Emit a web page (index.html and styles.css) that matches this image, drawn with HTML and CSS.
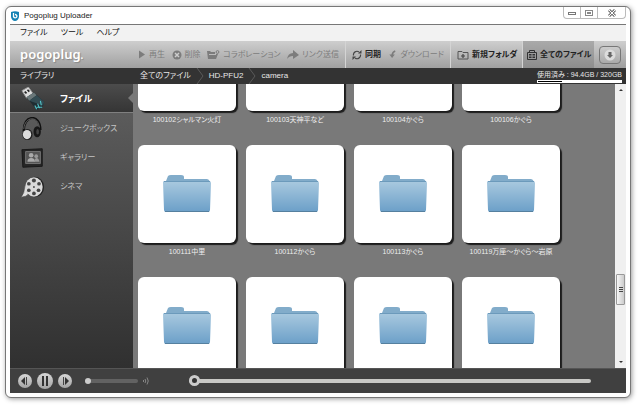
FILE: index.html
```html
<!DOCTYPE html>
<html lang="ja">
<head>
<meta charset="utf-8">
<title>Pogoplug Uploader</title>
<link rel="stylesheet" href="styles.css">
</head>
<body>
<svg class="defs" aria-hidden="true">
  <defs>
    <linearGradient id="blue" x1="0" y1="0" x2="0" y2="1"><stop offset="0" stop-color="#a9c9df"/><stop offset="1" stop-color="#6b9fc8"/></linearGradient>
    <linearGradient id="silver" x1="0" y1="0" x2="0" y2="1"><stop offset="0" stop-color="#d8d8d8"/><stop offset="1" stop-color="#a4a4a4"/></linearGradient>
    <symbol id="folder" viewBox="0 0 50 40">
      <path d="M4 7 6 2Q7 1 9 1H19Q22 1 22 3V5H45Q47 5 48 8V14H4Z" fill="#82acca"/>
      <path d="M1 8Q1 7 3 7H47Q49 7 49 9L48 36Q48 38 46 38H4Q2 38 2 36Z" fill="url(#blue)"/>
      <path d="M2 7.5H48" stroke="#6c9abb"/><path d="M3 37.5H47" stroke="#55809f"/>
    </symbol>
  </defs>
</svg>
<div class="window">
  <header class="titlebar">
    <svg class="app-icon" viewBox="0 0 10 10"><path d="M1 1Q5-.5 9 1V6Q8 10 5 10T1 6Z" fill="#1482b4"/><path d="M3.5 2V6M3.5 5A1.7 1.7 0 1 0 5 3.5" fill="none" stroke="#fff" stroke-width="1.3"/></svg>
    <h1>Pogoplug Uploader</h1>
    <div class="window-buttons">
      <button aria-label="最小化"><svg viewBox="0 0 10 8"><rect x="1.5" y="3.5" width="7" height="2" fill="#fff" stroke="#777"/></svg></button>
      <button aria-label="最大化"><svg viewBox="0 0 10 8"><rect x="1.5" y="1.5" width="7" height="5" fill="#fff" stroke="#888"/><rect x="3.5" y="3.5" width="3" height="1" fill="none" stroke="#888"/></svg></button>
      <button class="close" aria-label="閉じる"><svg viewBox="0 0 10 8"><path d="M2 1 8 7M8 1 2 7" stroke="#777" stroke-width="3"/><path d="M2 1 8 7M8 1 2 7" stroke="#fff"/></svg></button>
    </div>
  </header>
  <div class="client">
    <nav class="menubar"><button>ファイル</button><button>ツール</button><button>ヘルプ</button></nav>
    <div class="toolbar">
      <div class="logo">pogoplug<small>.</small></div>
      <div class="group actions">
        <button disabled><svg viewBox="0 0 8 8" class="i8"><path d="M1 0 7 4 1 8Z" fill="currentColor"/></svg>再生</button>
        <button disabled><svg viewBox="0 0 10 10" class="i10"><circle cx="5" cy="5" r="4.5" fill="currentColor"/><path d="M3 3 7 7M7 3 3 7" stroke="#ccc" stroke-width="1.5"/></svg>削除</button>
        <button disabled><svg viewBox="0 0 13 10" class="i13"><path d="M0 1H3L4 2H8V4H11L9 9H1Z" fill="currentColor"/><path d="M2 4.5H9" stroke="#bbb"/><circle cx="10.5" cy="2" r="1.4" fill="none" stroke="currentColor"/></svg>コラボレーション</button>
        <button disabled><svg viewBox="0 0 12 10" class="i12"><path d="M0 9Q1 3 6 3V0L12 5 6 9V6Q2 6 0 9Z" fill="currentColor"/></svg>リンク送信</button>
      </div>
      <div class="group sync">
        <button><svg viewBox="0 0 10 10" class="i10"><path d="M1.5 5.5A3.5 3.5 0 0 1 7 2M8.5 4.5A3.5 3.5 0 0 1 3 8" fill="none" stroke="#444" stroke-width="1.2"/><path d="M6 3.5H9.5V0ZM4 6.5H.5V10Z" fill="#444"/></svg>同期</button>
        <button disabled><svg viewBox="0 0 8 10" class="i8"><path d="M6.5 1Q3.5 2 3 6" fill="none" stroke="currentColor" stroke-width="1.8"/><path d="M0 5H6L3 9Z" fill="currentColor"/></svg>ダウンロード</button>
      </div>
      <div class="group create"><button><svg viewBox="0 0 12 10" class="i12"><path d="M1 1.5H5L6 2.5H11V9H1Z" fill="none" stroke="#555"/><path d="M6 4V8M4 6H8" stroke="#444" stroke-width="1.2"/></svg>新規フォルダ</button></div>
      <div class="group all"><button><svg viewBox="0 0 10 10" class="i10"><path d="M.5 2.5H9.5V9.5H.5ZM2.5 2V.5H7.5V2" fill="none" stroke="#333"/><path d="M2 4H4.5V5.5H2ZM5.5 4H8V5.5H5.5ZM2 6.5H4.5V8H2ZM5.5 6.5H8V8H5.5Z" fill="#333"/></svg>全てのファイル</button></div>
      <button class="drop" aria-label="転送"><svg viewBox="0 0 12 12"><circle cx="6" cy="6" r="5.5" fill="#ddd"/><path d="M4.5 3H7.5V6H9L6 9 3 6H4.5Z" fill="#666"/></svg></button>
    </div>
    <div class="pathbar">
      <h2>ライブラリ</h2>
      <nav class="crumbs">
        <a href="#">全てのファイル</a><svg viewBox="0 0 8 16"><path d="M1 0 7 8 1 16" fill="none" stroke="#5a5a5a"/></svg>
        <a href="#">HD-PFU2</a><svg viewBox="0 0 8 16"><path d="M1 0 7 8 1 16" fill="none" stroke="#5a5a5a"/></svg>
        <a href="#">camera</a>
      </nav>
      <div class="usage"><span>使用済み : 94.4GB / 320GB</span><div class="meter"><i></i></div></div>
    </div>
    <div class="main">
      <nav class="sidebar">
        <a href="#" class="active"><svg viewBox="0 0 26 26"><path d="M1 4 8 0 13 7 6 12Z" fill="#ddd" stroke="#999"/><path d="M4 5 6 7M7 3 9 5" stroke="#222" stroke-width="1.8"/><path d="M6 11 14 6 25 16Q26 22 17 25Z" fill="#1f2d32"/><path d="M6 11 14 6 17 9 9 15Z" fill="#6a7779"/><path d="M9 15 17 9 25 16 24 20Z" fill="#344c53"/><path d="M15 20 17 24M18 18 20 23M21 15 22 20M17 22H23" stroke="#53c4c9" stroke-width="1.2"/></svg>ファイル</a>
        <a href="#"><svg viewBox="0 0 26 26"><path d="M3 16C2-3 21-4 21 14" fill="none" stroke="#111" stroke-width="2.5"/><path d="M3 13C4-1 19-2 20 12" fill="none" stroke="#888" stroke-width=".7"/><ellipse cx="17.5" cy="16" rx="4" ry="6" fill="#171717"/><ellipse cx="18" cy="16" rx="1.5" ry="3" fill="#444"/><ellipse cx="7" cy="19" rx="5.5" ry="6" fill="#222"/><ellipse cx="6.5" cy="19" rx="4.5" ry="5" fill="#ddd"/></svg>ジュークボックス</a>
        <a href="#"><svg viewBox="0 0 26 26"><path d="M1 4 23 3V22L2 23Z" fill="#262626" stroke="#171717"/><path d="M5 6H21V19H5Z" fill="#555" stroke="#777"/><circle cx="11" cy="10" r="2.5" fill="#aaa"/><path d="M7 17Q7 13 11 13T15 17Z" fill="#aaa"/><circle cx="16.5" cy="11" r="2" fill="#999"/><path d="M14 17Q15 13 17 13T20 17Z" fill="#999"/></svg>ギャラリー</a>
        <a href="#"><svg viewBox="0 0 26 26"><path d="M4 12Q4 20 0 24L5 23Q9 21 9 17Z" fill="#ddd" stroke="#444" stroke-width=".6"/><ellipse cx="15" cy="13" rx="10" ry="11" fill="#222"/><ellipse cx="14" cy="13" rx="9.5" ry="10.5" fill="#d9d9d9"/><g fill="#444"><circle cx="14" cy="6" r="2.2"/><circle cx="19.5" cy="9.5" r="2"/><circle cx="19" cy="16.5" r="2"/><circle cx="14" cy="20" r="2"/><circle cx="8.5" cy="16.5" r="2"/><circle cx="8.5" cy="9.5" r="2"/><circle cx="14" cy="13" r="1"/></g></svg>シネマ</a>
      </nav>
      <div class="files">
        <div class="grid">
          <figure><div class="tile"><svg><use href="#folder"/></svg></div><figcaption>100102シャルマン火灯</figcaption></figure>
          <figure><div class="tile"><svg><use href="#folder"/></svg></div><figcaption>100103天神平など</figcaption></figure>
          <figure><div class="tile"><svg><use href="#folder"/></svg></div><figcaption>100104かぐら</figcaption></figure>
          <figure><div class="tile"><svg><use href="#folder"/></svg></div><figcaption>100106かぐら</figcaption></figure>
          <figure><div class="tile"><svg><use href="#folder"/></svg></div><figcaption>100111中里</figcaption></figure>
          <figure><div class="tile"><svg><use href="#folder"/></svg></div><figcaption>100112かぐら</figcaption></figure>
          <figure><div class="tile"><svg><use href="#folder"/></svg></div><figcaption>100113かぐら</figcaption></figure>
          <figure><div class="tile"><svg><use href="#folder"/></svg></div><figcaption>100119万座～かぐら～岩原</figcaption></figure>
          <figure><div class="tile"><svg><use href="#folder"/></svg></div></figure>
          <figure><div class="tile"><svg><use href="#folder"/></svg></div></figure>
          <figure><div class="tile"><svg><use href="#folder"/></svg></div></figure>
          <figure><div class="tile"><svg><use href="#folder"/></svg></div></figure>
        </div>
      </div>
      <div class="scrollbar">
        <svg viewBox="0 0 6 4"><path d="M1 3 3 1 5 3Z" fill="#333"/></svg>
        <div class="track"><div class="thumb"><svg viewBox="0 0 4 6"><path d="M0 .5H4M0 2.5H4M0 4.5H4" stroke="#444"/></svg></div></div>
        <svg viewBox="0 0 6 4"><path d="M1 1 3 3 5 1Z" fill="#333"/></svg>
      </div>
    </div>
    <footer class="player">
      <button aria-label="前へ"><svg viewBox="0 0 14 14"><circle cx="7" cy="7" r="7" fill="url(#silver)"/><path d="M7 3V11L3 7Z" fill="#333"/><path d="M8.5 3V11" stroke="#444"/></svg></button>
      <button class="pause" aria-label="一時停止"><svg viewBox="0 0 16 16"><circle cx="8" cy="8" r="8" fill="url(#silver)"/><path d="M5 3H7V13H5ZM9 3H11V13H9Z" fill="#333"/></svg></button>
      <button aria-label="次へ"><svg viewBox="0 0 14 14"><circle cx="7" cy="7" r="7" fill="url(#silver)"/><path d="M7 3V11L11 7Z" fill="#333"/><path d="M5.5 3V11" stroke="#444"/></svg></button>
      <input class="volume" type="range" min="0" max="100" value="0" aria-label="音量">
      <svg class="speaker" viewBox="0 0 6 8"><path d="M.5 3V5M2 2Q3.5 4 2 6M4 .5Q6.500 4 4 7.500" fill="none" stroke="#999" stroke-width=".8"/></svg>
      <input class="seek" type="range" min="0" max="100" value="0" aria-label="再生位置">
    </footer>
  </div>
</div>
</body>
</html>
```
FILE: styles.css
```css
* { box-sizing: border-box; }
body {
  margin: 0;
  height: 100vh;
  padding: 6px 9px 9px 5px;
  background: #fff;
  color: #222;
  font: 8px/12px "Liberation Sans", "Noto Sans CJK JP", sans-serif;
  font-feature-settings: "palt";
}
button { margin: 0; padding: 0; border: 0; background: none; font: inherit; color: inherit; font-feature-settings: inherit; }
a { color: inherit; text-decoration: none; }
svg { display: block; flex: none; }
h1, h2, figure { margin: 0; font: inherit; }
.defs { position: absolute; width: 0; height: 0; }

.window {
  display: flex;
  flex-direction: column;
  height: 100%;
  padding: 0 4px 4px;
  border: 1px solid #777;
  border-radius: 6px;
  background: #fff;
  box-shadow: 1px 1px 5px #999;
}
.titlebar { display: flex; height: 17px; flex: none; }
.app-icon { width: 10px; height: 10px; margin-top: 4px; }
.titlebar h1 { flex: 1; margin: 3px 0 0 4px; }
.window-buttons { display: flex; height: 12px; border: 1px solid #bbb; border-top: 0; border-radius: 0 0 4px 4px; }
.window-buttons button { width: 17px; display: grid; place-items: center; border-right: 1px solid #bbb; }
.window-buttons .close { width: 27px; border: 0; }
.window-buttons svg { width: 10px; height: 8px; }

.client { display: flex; flex-direction: column; flex: 1; min-height: 0; border-top: 1px solid #777; }
.menubar { display: flex; gap: 13px; height: 16px; flex: none; padding-left: 10px; background: #f2f2f2; color: #111; }

.toolbar {
  display: flex;
  align-items: center;
  height: 27px;
  flex: none;
  padding-right: 5px;
  background: linear-gradient(#cecece, #a0a0a0);
}
.logo { flex: 1; padding-left: 10px; color: #fff; font: 600 13px/20px "Noto Sans", sans-serif; text-shadow: 1px 1px 1px #888; }
.logo small { font-size: 10px; }
.group { display: flex; align-items: center; justify-content: space-between; height: 27px; padding: 0 6px; border-right: 1px solid #d4d4d4; white-space: nowrap; font-size: 8px; }
.group button { display: flex; align-items: center; gap: 3px; color: #222; font-weight: bold; }
.group button:disabled { color: #7c7c7c; font-weight: normal; }
.actions { width: 208px; padding-left: 0; }
.sync { width: 105px; }
.create { width: 72px; }
.all { width: 71px; padding: 0 2px 0 4px; border: 0; background: linear-gradient(#aaa, #8d8d8d); }
.i8 { width: 8px; height: 9px; }
.i10 { width: 10px; height: 10px; }
.i12 { width: 12px; height: 10px; }
.i13 { width: 13px; height: 10px; }
.drop { display: grid; place-items: center; width: 22px; height: 18px; margin-left: 5px; border: 1px solid #777; border-radius: 4px; background: linear-gradient(#ccc, #aaa); }
.drop svg { width: 12px; height: 12px; }

.pathbar { display: flex; align-items: center; height: 16px; flex: none; padding-right: 4px; background: #333; color: #e8e8e8; }
.pathbar h2 { width: 130px; padding-left: 10px; }
.crumbs { display: flex; flex: 1; align-items: center; gap: 5px; }
.crumbs a { white-space: nowrap; }
.crumbs svg { width: 8px; height: 16px; }
.usage { flex: none; font-size: 7px; line-height: 10px; white-space: nowrap; }
.usage span { display: block; text-align: right; }
.meter { height: 3px; border: 1px solid #fff; background: #fff; }
.meter i { display: block; width: 29%; height: 1px; background: #000; }

.main { display: flex; flex: 1; min-height: 0; overflow: hidden; background: #797979; }
.sidebar { width: 123px; flex: none; background: linear-gradient(#606060, #303030); color: #c4c4c4; }
.sidebar a { display: flex; align-items: center; gap: 14px; height: 29px; padding: 2px 0 0 10px; }
.sidebar svg { width: 26px; height: 24px; }
.sidebar .active { position: relative; border-bottom: 1px solid #808080; background: linear-gradient(#4c4c4c, #353535); color: #fff; font-size: 9px; font-weight: bold; }
.sidebar .active::after { content: ""; position: absolute; right: 0; top: 9px; border: 5px solid transparent; border-left: 0; border-right-color: #797979; }
.files { flex: 1; min-width: 0; padding-left: 5px; overflow: hidden; }
.grid { display: grid; grid-template-columns: repeat(auto-fill, 98px); grid-auto-rows: 122px; gap: 10px; margin-top: -71px; }
.tile { display: grid; place-items: center; height: 98px; border-radius: 6px; background: #fff; box-shadow: 2px 2px 1px #1c1c1c; }
.tile svg { width: 50px; height: 40px; }
.grid figcaption { margin-top: 3px; color: #eee; font-size: 7px; text-align: center; white-space: nowrap; }
.scrollbar { display: flex; flex-direction: column; align-items: center; width: 11px; flex: none; padding: 4px 0; background: #f0f0f0; }
.scrollbar > svg { width: 6px; height: 4px; }
.track { flex: 1; width: 100%; padding: 182px 1px 0; }
.thumb { display: grid; place-items: center; height: 31px; border: 1px solid #999; border-radius: 1px; background: linear-gradient(90deg, #f6f6f6, #ccc); }
.thumb svg { width: 4px; height: 6px; }

.player { display: flex; align-items: center; gap: 5px; height: 25px; flex: none; padding: 0 35px 0 8px; border-top: 1px solid #555; background: #404040; }
.player button svg { width: 14px; height: 14px; }
.player .pause svg { width: 16px; height: 16px; }
.player input { appearance: none; height: 12px; margin: 0; background: none; }
.player input::-webkit-slider-runnable-track { height: 4px; border-radius: 2px; background: #626262; }
.player input::-webkit-slider-thumb { appearance: none; width: 6px; height: 6px; margin-top: -1px; border-radius: 50%; background: #ccc; }
.player .volume { width: 53px; margin-left: 8px; }
.speaker { width: 6px; height: 8px; margin-right: 35px; }
.player .seek { flex: 1; min-width: 0; }
.player .seek::-webkit-slider-runnable-track { background: #c8c8c5; }
.player .seek::-webkit-slider-thumb { width: 11px; height: 11px; margin-top: -4px; border: 3px solid #ccc; background: #333; }
```
